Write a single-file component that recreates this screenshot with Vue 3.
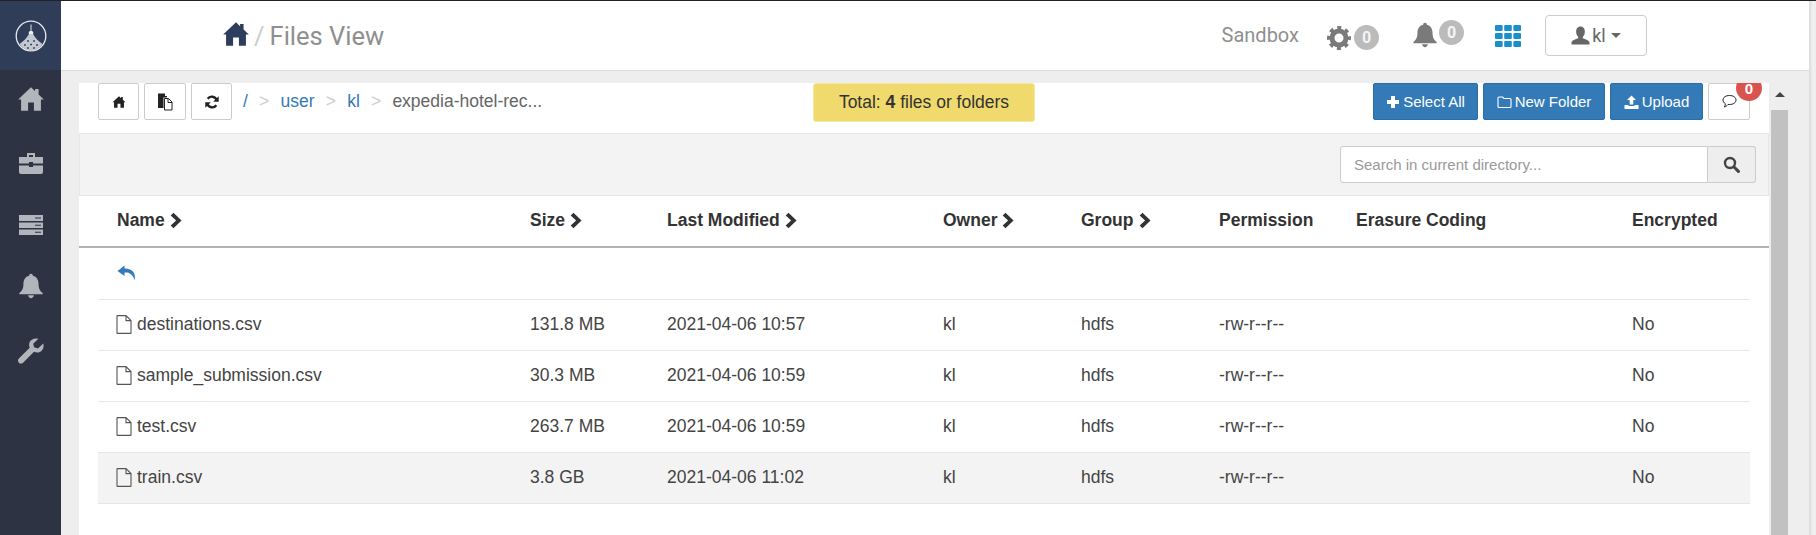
<script setup>
const columns = [
  { label: 'Name', sort: true, w: 413 },
  { label: 'Size', sort: true, w: 137 },
  { label: 'Last Modified', sort: true, w: 276 },
  { label: 'Owner', sort: true, w: 138 },
  { label: 'Group', sort: true, w: 138 },
  { label: 'Permission', w: 137 },
  { label: 'Erasure Coding', w: 276 },
  { label: 'Encrypted', w: 118 }
]
const files = [
  { name: 'destinations.csv', size: '131.8 MB', date: '2021-04-06 10:57' },
  { name: 'sample_submission.csv', size: '30.3 MB', date: '2021-04-06 10:59' },
  { name: 'test.csv', size: '263.7 MB', date: '2021-04-06 10:59' },
  { name: 'train.csv', size: '3.8 GB', date: '2021-04-06 11:02', active: true }
]
const HOME = 'M12 2 L1 12.5 L3.5 12.5 L3.5 22 L9.5 22 L9.5 15 L14.5 15 L14.5 22 L20.5 22 L20.5 12.5 L23 12.5 L18.5 8.2 L18.5 3.5 L15.5 3.5 L15.5 5.4 Z'
const BELL = 'M12 1.5 C13 1.5 13.6 2.2 13.6 3.2 C17 4 18.5 6.8 18.5 10.5 C18.5 14.5 19.8 16.2 22 18 L22 19 L2 19 L2 18 C4.2 16.2 5.5 14.5 5.5 10.5 C5.5 6.8 7 4 10.4 3.2 C10.4 2.2 11 1.5 12 1.5 Z M9.5 20 L14.5 20 C14.2 21.5 13.2 22.5 12 22.5 C10.8 22.5 9.8 21.5 9.5 20 Z'
const CHEVRON = 'M3.2 0.5 L10.6 7.5 L3.2 14.5 L0.6 12 L5.6 7.5 L0.6 3 Z'
</script>

<template>
  <div class="app">
    <aside class="sidebar">
      <div class="logo">
        <svg width="32" height="32" viewBox="0 0 32 32">
          <circle cx="16" cy="16" r="14.8" fill="none" stroke="#e8eaee" stroke-width="1.3" />
          <path d="M15.5 4.5 H16.5 V10.5 H15.5 Z" fill="#dfe2e7" />
          <path d="M13.8 14 V12 Q16 9 18.2 12 V14 Z" fill="#eceef1" />
          <path d="M14 14 H18 C20 18 23.5 21 27.4 24 C24.6 28 20.5 30.6 16 30.6 C11.5 30.6 7.4 28 4.6 24 C8.5 21 12 18 14 14 Z" fill="#c4c8d0" />
          <path d="M12 21 h2 M18 21 h2 M9 25 h2 M15 24.5 h2 M21 25 h2 M12 28 h2 M18 28 h2" stroke="#3a4860" stroke-width="1.4" fill="none" />
        </svg>
      </div>
      <nav class="side-nav">
        <svg width="28" height="28" viewBox="0 0 24 24"><path :d="HOME" /></svg>
        <svg width="26" height="24" viewBox="0 0 26 24">
          <path d="M9 2 H17 V6 H15 V4 H11 V6 H9 Z M1 6 H25 V12.5 H15 V11 H11 V12.5 H1 Z M1 14.5 H11 V16 H15 V14.5 H25 V21 Q25 23 23 23 H3 Q1 23 1 21 Z" />
        </svg>
        <svg width="26" height="24" viewBox="0 0 26 24">
          <path d="M1 2 H25 V8 H1 Z M1 9.5 H25 V15 H1 Z M1 16.5 H25 V22 H1 Z" />
          <path d="M17 4.5 H23 V5.5 H17 Z M17 11.7 H23 V12.7 H17 Z M17 18.8 H23 V19.8 H17 Z" fill="#2e3344" />
        </svg>
        <svg class="side-bell" width="28" height="28" viewBox="0 0 24 24"><path :d="BELL" /></svg>
        <svg class="side-wrench" width="28" height="28" viewBox="0 0 24 24">
          <path d="M22.5 5.5 L18 9.8 L14.6 8.8 L13.9 5.8 L18.3 1.5 C15 0.6 11.5 2 10.6 5 C10.2 6.4 10.3 8 10.9 9.2 L1.6 18.5 C0.6 19.5 0.6 21 1.6 22 C2.6 23 4.2 23 5.2 22 L14.6 12.6 C16 13.3 17.6 13.5 19 13 C22 12 23.4 8.8 22.5 5.5 Z" />
        </svg>
      </nav>
    </aside>

    <div class="main">
      <header class="topbar">
        <div class="crumb-title">
          <svg class="title-home" width="28" height="28" viewBox="0 0 24 24"><path :d="HOME" /></svg>
          <span class="slash">/</span>
          <span class="title">Files View</span>
        </div>
        <div class="top-right">
          <span class="env">Sandbox</span>
          <span class="gear-wrap">
            <svg width="24" height="24" viewBox="0 0 24 24">
              <circle cx="12" cy="12" r="7" fill="none" stroke="#7a7a7a" stroke-width="5" />
              <circle cx="12" cy="12" r="10.2" fill="none" stroke="#7a7a7a" stroke-width="3.6" stroke-dasharray="4 4" stroke-dashoffset="2" />
            </svg>
            <span class="count">0</span>
          </span>
          <span class="bell-wrap">
            <svg width="28" height="28" viewBox="0 0 24 24"><path :d="BELL" fill="#7a7a7a" /></svg>
            <span class="count">0</span>
          </span>
          <svg class="apps" width="26" height="24" viewBox="0 0 26 24">
            <g fill="#1a8fc8">
              <rect x="0" y="1" width="7.6" height="6" rx="1" /><rect x="9.2" y="1" width="7.6" height="6" rx="1" /><rect x="18.4" y="1" width="7.6" height="6" rx="1" />
              <rect x="0" y="9" width="7.6" height="6" rx="1" /><rect x="9.2" y="9" width="7.6" height="6" rx="1" /><rect x="18.4" y="9" width="7.6" height="6" rx="1" />
              <rect x="0" y="17" width="7.6" height="6" rx="1" /><rect x="9.2" y="17" width="7.6" height="6" rx="1" /><rect x="18.4" y="17" width="7.6" height="6" rx="1" />
            </g>
          </svg>
          <button class="user-btn">
            <svg width="19" height="19" viewBox="0 0 20 20"><path d="M10 0.5 C13 0.5 14.6 3 14.6 6 C14.6 8.6 13.4 10.5 12.4 11.5 L12.4 13 C15 14 19.5 15 19.5 18 L19.5 19.5 L0.5 19.5 L0.5 18 C0.5 15 5 14 7.6 13 L7.6 11.5 C6.6 10.5 5.4 8.6 5.4 6 C5.4 3 7 0.5 10 0.5 Z" fill="#666" /></svg>
            <span>kl</span>
            <i class="caret"></i>
          </button>
        </div>
      </header>

      <div class="body">
        <section class="panel">
          <div class="toolbar">
            <div class="tools">
              <button class="tool w41">
                <svg width="14" height="14" viewBox="0 0 24 24"><path :d="HOME" fill="#222" /></svg>
              </button>
              <button class="tool w42">
                <svg width="16" height="18" viewBox="0 0 16 18">
                  <path d="M1 0.5 H8 V3 H10 V4.5 H6.5 V15 H1 Z" fill="#222" />
                  <path d="M7.5 5.5 H11.5 L15 9 V17 H7.5 Z" fill="#fff" stroke="#222" stroke-width="1" />
                  <path d="M11 5.5 V9.5 H15" fill="none" stroke="#222" stroke-width="1" />
                </svg>
              </button>
              <button class="tool w41">
                <svg width="14" height="14" viewBox="0 0 24 24">
                  <path d="M20 8.5 A9 9 0 0 0 4.5 6.5" fill="none" stroke="#222" stroke-width="4" />
                  <path d="M23.5 2 V11.5 H14 Z M0.5 22 V12.5 H10 Z" fill="#222" />
                  <path d="M4 15.5 A9 9 0 0 0 19.5 17.5" fill="none" stroke="#222" stroke-width="4" />
                </svg>
              </button>
            </div>
            <ol class="path">
              <li><a>/</a></li>
              <li><a>user</a></li>
              <li><a>kl</a></li>
              <li class="leaf">expedia-hotel-rec...</li>
            </ol>
            <div class="total">Total: <b>4</b> files or folders</div>
            <div class="actions">
              <button class="primary w105">
                <svg width="14" height="14" viewBox="0 0 14 14"><path d="M5 1 H9 V5 H13 V9 H9 V13 H5 V9 H1 V5 H5 Z" fill="#fff" /></svg>
                Select All
              </button>
              <button class="primary w122">
                <svg width="15" height="14" viewBox="0 0 15 14"><path d="M1 11.5 V3 Q1 2 2 2 H5.5 L7 3.5 H13 Q14 3.5 14 4.5 V11.5 Q14 12.5 13 12.5 H2 Q1 12.5 1 11.5 Z" fill="none" stroke="#fff" stroke-width="1.1" /></svg>
                New Folder
              </button>
              <button class="primary w93">
                <svg width="15" height="14" viewBox="0 0 15 14"><path d="M7.5 0.5 L12 5 H9.3 V9.5 H5.7 V5 H3 Z M0.5 10 H4.5 V11 H10.5 V10 H14.5 V14 H0.5 Z" fill="#fff" /></svg>
                Upload
              </button>
              <button class="comment">
                <svg width="15" height="15" viewBox="0 0 15 15"><path d="M7.5 1.5 C11.3 1.5 14 3.4 14 6 C14 8.6 11.3 10.5 7.5 10.5 L6 10.5 C5 11.7 3.8 12.7 2.4 13 C3 12 3.4 11 3.3 9.7 C1.8 8.8 1 7.5 1 6 C1 3.4 3.7 1.5 7.5 1.5 Z" fill="none" stroke="#222" stroke-width="1" /></svg>
              </button>
              <span class="badge">0</span>
            </div>
          </div>

          <div class="search-bar">
            <div class="search">
              <input type="text" placeholder="Search in current directory..." />
              <button class="search-btn">
                <svg width="17" height="17" viewBox="0 0 17 17"><circle cx="7" cy="7" r="5" fill="none" stroke="#444" stroke-width="2.4" /><path d="M10.8 10.8 L15.4 15.4" stroke="#444" stroke-width="3" stroke-linecap="round" /></svg>
              </button>
            </div>
          </div>

          <div class="thead">
            <div v-for="c in columns" :key="c.label" class="th" :style="{ width: c.w + 'px' }">
              {{ c.label }}
              <svg v-if="c.sort" width="12" height="17" viewBox="0 0 11 15"><path :d="CHEVRON" fill="#333" /></svg>
            </div>
          </div>

          <div class="rows">
            <div class="row back">
              <svg width="19" height="16" viewBox="0 0 19 16"><path d="M7.5 0.5 L0.5 6 L7.5 11 V7.6 C12 7.2 15.5 8.6 17.6 15.5 C19 9 16 3.5 7.5 3.6 Z" fill="#337ab7" /></svg>
            </div>
            <div v-for="f in files" :key="f.name" class="row" :class="{ active: f.active }">
              <div class="cell" :style="{ width: '413px' }">
                <svg class="file" width="16" height="19" viewBox="0 0 16 19"><path d="M1 1 Q1 0.6 1.5 0.6 H10 L15 5.6 V18 Q15 18.4 14.5 18.4 H1.5 Q1 18.4 1 18 Z M10 0.6 V5.6 H15" fill="none" stroke="#555" stroke-width="1.1" /></svg>
                {{ f.name }}
              </div>
              <div class="cell" :style="{ width: '137px' }">{{ f.size }}</div>
              <div class="cell" :style="{ width: '276px' }">{{ f.date }}</div>
              <div class="cell" :style="{ width: '138px' }">kl</div>
              <div class="cell" :style="{ width: '138px' }">hdfs</div>
              <div class="cell" :style="{ width: '137px' }">-rw-r--r--</div>
              <div class="cell" :style="{ width: '276px' }"></div>
              <div class="cell" :style="{ width: '99px' }">No</div>
            </div>
          </div>
        </section>
        <div class="vscroll">
          <i class="up"></i>
          <div class="thumb"></div>
        </div>
      </div>
    </div>
    <div class="page-edge"></div>
  </div>
</template>

<style>
html, body { margin: 0; padding: 0; overflow: hidden; }
</style>

<style scoped>
.app {
  display: flex;
  width: 1816px;
  height: 535px;
  box-sizing: border-box;
  border-top: 1px solid #222;
  overflow: hidden;
  font-family: "Liberation Sans", Arial, sans-serif;
  color: #333;
  background: #eee;
}
button { font-family: inherit; cursor: pointer; }

.sidebar { width: 61px; flex: none; background: #2e3344; }
.logo { height: 69px; background: #2f3d58; display: flex; align-items: center; justify-content: center; }
.side-nav { display: flex; flex-direction: column; align-items: center; gap: 38px; padding-top: 15px; }
.side-nav svg { fill: #b1b5bc; display: block; }
.side-nav .side-bell { margin-top: -3px; }
.side-nav .side-wrench { margin-top: -1px; }

.main { width: 1748px; flex: none; display: flex; flex-direction: column; }
.topbar {
  height: 70px;
  flex: none;
  box-sizing: border-box;
  background: #fff;
  border-bottom: 1px solid #ddd;
  display: flex;
  align-items: center;
  justify-content: space-between;
  padding: 0 162px 0 161px;
}
.crumb-title { display: flex; align-items: center; font-family: Roboto, sans-serif; font-size: 25.5px; }
.title-home { fill: #2e3d5b; margin-bottom: 4px; }
.slash { color: #ccc; margin: 0 5px 0 4px; }
.title { color: #8f8f8f; }

.top-right { display: flex; align-items: center; font-family: Roboto, sans-serif; }
.env { color: #8f8f8f; font-size: 20px; margin-right: 28px; margin-top: -1px; }
.gear-wrap, .bell-wrap { display: flex; align-items: center; }
.gear-wrap { gap: 3px; margin-top: 4px; margin-right: 32px; }
.bell-wrap { gap: 0; margin-top: -2px; margin-right: 31px; }
.count {
  width: 25px;
  height: 25px;
  border-radius: 50%;
  background: #bbb;
  color: #f4f4f4;
  font-size: 16px;
  font-weight: 700;
  display: flex;
  align-items: center;
  justify-content: center;
}
.bell-wrap .count { margin-bottom: 4px; }
.apps { margin-right: 24px; }
.user-btn {
  width: 102px;
  height: 41px;
  background: #fff;
  border: 1px solid #ccc;
  border-radius: 4px;
  display: flex;
  align-items: center;
  justify-content: center;
  gap: 2px;
  color: #666;
  font-family: Roboto, sans-serif;
  font-size: 18px;
  padding: 0;
}
.caret {
  width: 0; height: 0;
  margin-left: 3px;
  border-left: 5px solid transparent;
  border-right: 5px solid transparent;
  border-top: 5px solid #666;
}

.body { flex: 1; display: flex; padding: 12px 0 0 18px; min-height: 0; }
.panel { width: 1690px; flex: none; background: #fff; overflow: hidden; }
.toolbar {
  position: relative;
  height: 50px;
  box-sizing: border-box;
  padding-left: 19px;
  display: flex;
  align-items: flex-start;
  overflow: hidden;
}
.tools { display: flex; gap: 5px; }
.tool {
  height: 37px;
  padding: 0;
  background: #fff;
  border: 1px solid #ccc;
  border-radius: 2px;
  display: flex;
  align-items: center;
  justify-content: center;
}
.w41 { width: 41px; }
.w42 { width: 42px; }
.path { list-style: none; margin: 0; padding: 0 0 0 11px; height: 37px; display: flex; align-items: center; font-size: 17.5px; width: 581px; box-sizing: border-box; flex: none; }
.path li + li::before { content: ">"; color: #ccc; padding: 0 11.2px; }
.path a { color: #337ab7; }
.path .leaf { color: #666; }
.total {
  width: 222px;
  height: 39px;
  flex: none;
  box-sizing: border-box;
  background: #f0da6e;
  border: 1px solid #f5e79e;
  border-radius: 3px;
  font-size: 17.5px;
  display: flex;
  align-items: center;
  justify-content: center;
  white-space: pre;
}
.actions { margin-left: auto; display: flex; gap: 5px; padding-right: 19px; }
.primary {
  height: 37px;
  padding: 0;
  background: #337ab7;
  border: 1px solid #2e6da4;
  border-radius: 2px;
  color: #fff;
  font-size: 15px;
  display: flex;
  align-items: center;
  justify-content: center;
  gap: 3px;
}
.w105 { width: 105px; }
.w122 { width: 122px; }
.w93 { width: 93px; }
.comment {
  width: 42px;
  height: 37px;
  padding: 0;
  background: #fff;
  border: 1px solid #ccc;
  border-radius: 2px;
  display: flex;
  align-items: center;
  justify-content: center;
}
.badge {
  position: absolute;
  top: -8px;
  right: 7px;
  width: 26px;
  height: 26px;
  border-radius: 50%;
  background: #d9534f;
  color: #fff;
  font-size: 15px;
  font-weight: 700;
  display: flex;
  align-items: center;
  justify-content: center;
}

.search-bar {
  height: 63px;
  box-sizing: border-box;
  background: #f3f3f3;
  border: 1px solid #e7e7e7;
  display: flex;
  align-items: center;
  justify-content: flex-end;
  padding: 0 12px 1px 0;
}
.search { display: flex; width: 416px; height: 37px; }
.search input {
  flex: 1;
  min-width: 0;
  box-sizing: border-box;
  border: 1px solid #ccc;
  border-radius: 3px 0 0 3px;
  padding: 0 13px;
  font-family: inherit;
  font-size: 15px;
  color: #555;
  outline: none;
}
.search input::placeholder { color: #999; opacity: 1; }
.search-btn {
  width: 48px;
  padding: 0;
  background: #eee;
  border: 1px solid #ccc;
  border-left: 0;
  border-radius: 0 3px 3px 0;
  display: flex;
  align-items: center;
  justify-content: center;
}

.thead {
  height: 52px;
  box-sizing: border-box;
  display: flex;
  align-items: center;
  border-bottom: 2px solid #b3b3b3;
  padding-left: 38px;
  font-weight: 700;
  font-size: 17.5px;
}
.th { flex: none; display: flex; align-items: center; gap: 5px; color: #333; padding-bottom: 1px; white-space: nowrap; }

.rows { padding: 0 19px; }
.row {
  height: 51px;
  box-sizing: border-box;
  border-bottom: 1px solid #e6e6e6;
  display: flex;
  align-items: center;
  padding: 0 0 1px 19px;
  font-size: 17.5px;
  color: #444;
}
.row.back { height: 52px; padding-bottom: 2px; }
.row.active { background: #f3f3f3; }
.cell { flex: none; display: flex; align-items: center; gap: 5px; white-space: nowrap; }
.file { margin-left: -1px; }

.vscroll { width: 17px; margin-left: 2px; flex: none; display: flex; flex-direction: column; align-items: center; }
.up {
  margin-top: 9px;
  width: 0; height: 0;
  border-left: 5px solid transparent;
  border-right: 5px solid transparent;
  border-bottom: 5px solid #444;
}
.thumb { width: 17px; flex: 1; margin-top: 13px; background: #c1c1c1; }
.page-edge { flex: 1; background: linear-gradient(to right, #d9d9d9, #efefef 50%); }
</style>
